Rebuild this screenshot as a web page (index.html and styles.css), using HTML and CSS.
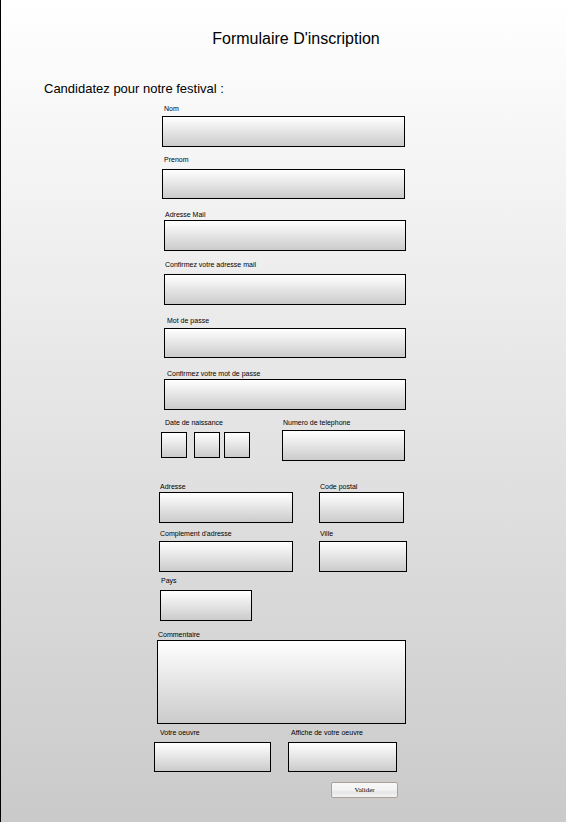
FILE: index.html
```html
<!DOCTYPE html>
<html lang="fr">
<head>
<meta charset="utf-8">
<meta name="viewport" content="width=device-width, initial-scale=1">
<title>Formulaire D'inscription</title>
<link rel="stylesheet" href="styles.css">
</head>
<body>
<header class="intro">
  <h1 class="title">Formulaire D'inscription</h1>
  <h2 class="subtitle">Candidatez pour notre festival :</h2>
</header>
<main class="page">
  <form class="form">
    <section class="group identity">
      <div class="field lead">
        <label class="label mid" for="nom">Nom</label>
        <input class="box" id="nom" type="text">
      </div>
      <div class="field">
        <label class="label loose" for="prenom">Prenom</label>
        <input class="box short" id="prenom" type="text">
      </div>
    </section>
    <section class="group account">
      <div class="field compact">
        <label class="label tight" for="mail">Adresse Mail</label>
        <input class="box" id="mail" type="email">
      </div>
      <div class="field">
        <label class="label loose" for="mail2">Confirmez votre adresse mail</label>
        <input class="box" id="mail2" type="email">
      </div>
    </section>
    <section class="group account password">
      <div class="field">
        <label class="label mid" for="mdp">Mot de passe</label>
        <input class="box short" id="mdp" type="password">
      </div>
      <div class="field compact">
        <label class="label tight" for="mdp2">Confirmez votre mot de passe</label>
        <input class="box" id="mdp2" type="password">
      </div>
    </section>
    <section class="group contact">
      <div class="field birth">
        <label class="label loose" for="jour">Date de naissance</label>
        <div class="dates">
          <input class="box" id="jour" type="text">
          <input class="box" type="text" aria-label="Mois">
          <input class="box" type="text" aria-label="Année">
        </div>
      </div>
      <div class="field">
        <label class="label mid" for="tel">Numero de telephone</label>
        <input class="box" id="tel" type="tel">
      </div>
    </section>
    <section class="group address">
      <div class="field">
        <label class="label tight" for="adresse">Adresse</label>
        <input class="box" id="adresse" type="text">
      </div>
      <div class="field postcode">
        <label class="label tight" for="cp">Code postal</label>
        <input class="box" id="cp" type="text">
      </div>
      <div class="field">
        <label class="label mid" for="complement">Complement d'adresse</label>
        <input class="box" id="complement" type="text">
      </div>
      <div class="field">
        <label class="label mid" for="ville">Ville</label>
        <input class="box" id="ville" type="text">
      </div>
      <div class="field country">
        <label class="label loose" for="pays">Pays</label>
        <input class="box" id="pays" type="text">
      </div>
    </section>
    <section class="group comment">
      <div class="field">
        <label class="label tight" for="commentaire">Commentaire</label>
        <textarea class="box" id="commentaire"></textarea>
      </div>
    </section>
    <section class="group files">
      <div class="field work">
        <label class="label loose" for="oeuvre">Votre oeuvre</label>
        <input class="box short" id="oeuvre" type="text">
      </div>
      <div class="field">
        <label class="label loose" for="affiche">Affiche de votre oeuvre</label>
        <input class="box short" id="affiche" type="text">
      </div>
    </section>
    <div class="actions">
      <button class="submit" type="submit">Valider</button>
    </div>
  </form>
</main>
</body>
</html>
```
FILE: styles.css
```css
* {
  box-sizing: border-box;
}

html {
  min-height: 100%;
  background: linear-gradient(#fff, #cacaca);
}

body {
  margin: 0;
  min-height: 100vh;
  border-left: 1px solid #000;
  font-family: "Liberation Sans", Arial, sans-serif;
  color: #000;
}

.intro {
  padding: 29px 18px 0 43px;
}

.title,
.subtitle {
  margin: 0;
  font-weight: 400;
}

.title {
  font-size: 16px;
  line-height: 20px;
  text-align: center;
}

.subtitle {
  margin-top: 32px;
  font-size: 13px;
  line-height: 16px;
}

/* The form sits in the middle track, slightly left of centre. */
.page {
  display: grid;
  grid-template-columns: 153fr 253fr 159fr;
  padding-bottom: 24px;
}

.form {
  grid-column: 2;
  min-width: 0;
}

/* --head is the space above a box; its label rests at the bottom of it. */
.group {
  --head: 22px;
  --indent: 1px;
}

.field {
  min-width: 0;
}

.label {
  display: flex;
  align-items: flex-end;
  height: var(--head);
  padding-left: var(--indent);
  font-size: 7px;
  line-height: 8px;
  white-space: nowrap;
}

.tight {
  padding-bottom: 1px;
}

.mid {
  padding-bottom: 3px;
}

.loose {
  padding-bottom: 5px;
}

.box {
  display: block;
  width: 100%;
  min-width: 0;
  height: 31px;
  margin: 0;
  padding: 2px 6px;
  border: 1px solid #000;
  border-radius: 0;
  background: linear-gradient(#fff, #cbcbcb);
  font-family: inherit;
  font-size: 13px;
  resize: none;
}

.short {
  height: 30px;
}

.identity {
  --indent: 2px;
  padding: 0 2px 0 8px;
}

.lead {
  --head: 19px;
}

.account {
  --head: 23px;
  padding: 0 1px 0 10px;
}

.compact {
  --head: 21px;
}

.password {
  --indent: 3px;
}

.contact {
  --head: 20px;
  display: grid;
  grid-template-columns: 89fr 123fr;
  column-gap: 32px;
  padding: 0 2px 0 7px;
}

.birth {
  --head: 22px;
  --indent: 4px;
}

.dates {
  display: flex;
  gap: 4px;
}

.dates .box {
  flex: 1;
  height: 26px;
}

.dates .box:first-child {
  margin-right: 3px;
}

.address {
  --head: 18px;
  display: grid;
  grid-template-columns: 134fr 88fr;
  column-gap: 26px;
  margin-top: 13px;
  padding-left: 5px;
}

.postcode {
  padding-right: 3px;
}

.country {
  padding-left: 1px;
}

.country .box {
  width: 69%;
}

.comment {
  --head: 19px;
  padding: 0 1px 0 3px;
}

.comment .box {
  height: 84px;
}

.files {
  --head: 18px;
  --indent: 3px;
  display: grid;
  grid-template-columns: 117fr 109fr;
  column-gap: 17px;
  padding-right: 10px;
}

.work {
  --indent: 6px;
}

.actions {
  display: flex;
  justify-content: flex-end;
  padding: 10px 9px 0 0;
}

.submit {
  width: 67px;
  height: 16px;
  padding: 0;
  border: 1px solid #aca196;
  border-radius: 2px;
  background: linear-gradient(#f8f8f8, #f3f3f3 50%, #e6e6e6 65%, #f4f4f4);
  color: #000;
  font-family: "Liberation Serif", "Times New Roman", serif;
  font-size: 7px;
  line-height: 8px;
}
```
